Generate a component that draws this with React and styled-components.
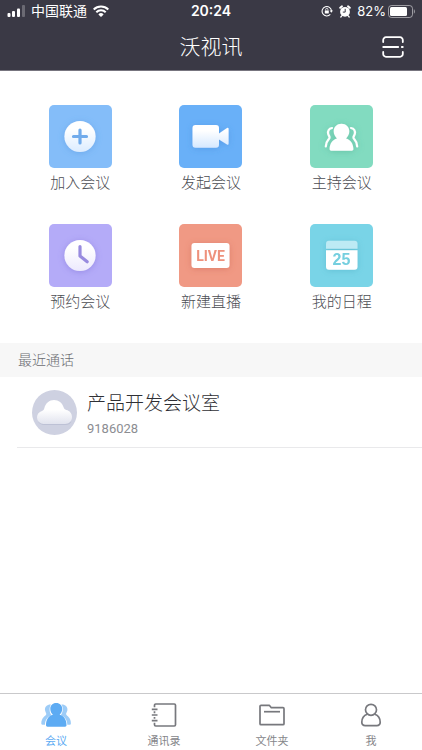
import React from "react";
import styled, { createGlobalStyle, css } from "styled-components";

const GlobalStyle = createGlobalStyle`
  *, *::before, *::after {
    box-sizing: border-box;
  }

  body {
    margin: 0;
    background: #fff;
    font-family: "Liberation Sans", "Noto Sans CJK SC", sans-serif;
    font-weight: 300;
  }

  svg {
    display: block;
    flex-shrink: 0;
  }
`;

const plainButton = css`
  border: 0;
  padding: 0;
  background: none;
  font: inherit;
  color: inherit;
  cursor: pointer;
`;

const Page = styled.div`
  display: flex;
  flex-direction: column;
  min-height: 100vh;
`;

const Header = styled.header`
  background: #3a3945;
  border-bottom: 1px solid #77757f;
  color: #fff;
`;

const StatusBar = styled.div`
  display: grid;
  grid-template-columns: 1fr auto 1fr;
  align-items: center;
  height: 22px;
  padding: 0 7px;
  font-family: Inter, "Noto Sans CJK SC", sans-serif;
  font-size: 14px;
  font-weight: 400;
  line-height: 20px;
`;

const StatusGroup = styled.div`
  display: flex;
  align-items: center;
  justify-content: ${({ $end }) => ($end ? "flex-end" : "flex-start")};
  gap: 6px;
`;

const Time = styled.time`
  font-weight: 600;
`;

const Battery = styled.span`
  display: flex;
  align-items: center;
  gap: 2px;
  font-size: 13px;
`;

const TitleBar = styled.div`
  display: grid;
  grid-template-columns: 1fr auto 1fr;
  align-items: center;
  height: 48px;
  padding: 2px 18px 0;
`;

const Title = styled.h1`
  grid-column: 2;
  margin: 0;
  font-size: 21px;
  font-weight: 300;
  line-height: 30px;
`;

const ScanButton = styled.button`
  ${plainButton}
  justify-self: end;
`;

const Main = styled.main`
  flex: 1;
`;

const ActionGrid = styled.section`
  display: grid;
  grid-template-columns: repeat(3, 1fr);
  row-gap: 29px;
  padding: 34px 15px 29px;
`;

const Action = styled.button`
  ${plainButton}
  display: flex;
  flex-direction: column;
  align-items: center;
  gap: 3px;
  color: #4c4d53;
  font-size: 15px;
  line-height: 24px;
`;

const Tile = styled.span`
  width: 63px;
  height: 63px;
  border-radius: 5px;
  background: ${({ $color }) => $color};
`;

const SectionTitle = styled.h2`
  margin: 0;
  padding: 0 18px;
  background: #f7f7f7;
  color: #6c6d72;
  font-size: 14px;
  font-weight: 300;
  line-height: 34px;
`;

const CallList = styled.ul`
  margin: 0;
  padding: 0 0 0 17px;
  list-style: none;
`;

const CallRow = styled.li`
  display: flex;
  gap: 10px;
  padding: 13px 15px 7px;
  border-bottom: 1px solid #e9e9eb;
`;

const CallName = styled.p`
  margin: 0;
  color: #2f3035;
  font-size: 19px;
  line-height: 28px;
`;

const CallNumber = styled.p`
  margin: 0;
  color: #8c8d92;
  font-family: Roboto, sans-serif;
  font-size: 13px;
  font-weight: 400;
  line-height: 22px;
`;

const TabBar = styled.nav`
  position: sticky;
  bottom: 0;
  display: grid;
  grid-template-columns: 6fr 6fr 6fr 5fr;
  padding: 8px 6px 1px 2px;
  border-top: 1px solid #c9c9cb;
  background: #fff;
`;

const Tab = styled.a`
  display: flex;
  flex-direction: column;
  align-items: center;
  gap: 5px;
  color: ${({ $active }) => ($active ? "#5dabf3" : "#85868a")};
  font-size: 11px;
  font-weight: 400;
  line-height: 16px;
  text-decoration: none;
`;

const SignalIcon = () => (
  <svg width="18" height="12" viewBox="0 0 18 12" fill="#fff">
    <rect x="0.5" y="8" width="3" height="4" rx="1" />
    <rect x="5" y="6" width="3" height="6" rx="1" />
    <rect x="10" y="3.5" width="3" height="8.5" rx="1" />
    <rect x="15" y="0" width="3" height="12" rx="1" opacity="0.25" />
  </svg>
);

const WifiIcon = () => (
  <svg width="16" height="12" viewBox="0 0 16 12" fill="none" stroke="#fff" strokeWidth="2">
    <path d="M0.7 4.5a10.4 10.4 0 0 1 14.6 0" />
    <path d="M3.3 7.3a6.7 6.7 0 0 1 9.4 0" />
    <path d="M8 12 5.4 9.4a3.7 3.7 0 0 1 5.2 0z" fill="#fff" stroke="none" />
  </svg>
);

const LockIcon = () => (
  <svg width="12" height="12" viewBox="0 0 12 12" fill="none" stroke="#fff">
    <path d="M9.3 9.4A4.7 4.7 0 1 1 10.5 6" strokeWidth="1.1" />
    <path d="M8.6 5.4h3.4l-1.7 2.3z" fill="#fff" stroke="none" />
    <rect x="3.8" y="5.4" width="4" height="3" rx="0.4" fill="#fff" stroke="none" />
    <path d="M4.7 5.5V4.4a1.1 1.1 0 0 1 2.2 0v1.1" strokeWidth="0.8" />
  </svg>
);

const AlarmIcon = () => (
  <svg width="12" height="13" viewBox="0 0 12 13">
    <circle cx="6" cy="6.8" r="4.9" fill="#fff" />
    <g stroke="#fff" strokeLinecap="round">
      <path d="M1.2 2.8 3 1.3M10.8 2.8 9 1.3" strokeWidth="1.9" />
      <path d="M2.8 10.8 1.8 12M9.2 10.8l1 1.2" strokeWidth="1.3" />
    </g>
    <path d="M6.2 3.8v3.3H3.8" fill="none" stroke="#3a3945" strokeWidth="1" />
  </svg>
);

const BatteryIcon = () => (
  <svg width="27" height="13" viewBox="0 0 27 13">
    <rect x="0.5" y="0.5" width="24" height="12" rx="3" fill="none" stroke="#fff" strokeOpacity="0.5" />
    <rect x="2" y="2" width="17" height="9" rx="1.5" fill="#fff" />
    <path d="M25.8 4.3c1.5.7 1.5 3.7 0 4.4z" fill="#fff" opacity="0.5" />
  </svg>
);

const ScanIcon = () => (
  <svg width="22" height="22" viewBox="0 0 22 22" fill="none" stroke="#fff" strokeWidth="1.8" strokeLinecap="round">
    <path d="M1.2 6V4A2.8 2.8 0 0 1 4 1.2h14A2.8 2.8 0 0 1 20.8 4v2" />
    <path d="M1.2 16v2A2.8 2.8 0 0 0 4 20.8h14a2.8 2.8 0 0 0 2.8-2.8v-2" />
    <path d="M1.2 11h15M19.8 11h1" />
  </svg>
);

// Shared frame of the home icons: fade from white plus a soft shadow
const TileIcon = ({ id, shade, tint, children }) => (
  <svg width="63" height="63" viewBox="0 0 63 63" aria-hidden="true">
    <defs>
      <linearGradient id={`${id}-fade`} x1="0" y1="0" x2="0" y2="1">
        <stop offset="0.25" stopColor="#fff" />
        <stop offset="1" stopColor={tint} />
      </linearGradient>
      <filter id={`${id}-shadow`} x="-40%" y="-40%" width="180%" height="180%">
        <feDropShadow dx="0" dy="1" stdDeviation="3" floodColor={shade} floodOpacity="0.45" />
      </filter>
    </defs>
    <g fill={`url(#${id}-fade)`} filter={`url(#${id}-shadow)`}>
      {children}
    </g>
  </svg>
);

const JoinIcon = () => (
  <TileIcon id="join" shade="#4f93dd" tint="#dcecff">
    <circle cx="31" cy="31.5" r="15.6" />
    <path d="M31 25v13M24.5 31.5h13" stroke="#70abec" strokeWidth="3.2" strokeLinecap="round" />
  </TileIcon>
);

const CameraIcon = () => (
  <TileIcon id="camera" shade="#3f86d8" tint="#d5e8ff">
    <path d="M16.5 20H37a3 3 0 0 1 3 3v5.6l8-5.6q1.6-.8 1.6 1v14.6q0 1.8-1.6 1L40 34.5v5.2a3 3 0 0 1-3 3H16.5a3 3 0 0 1-3-3V23a3 3 0 0 1 3-3z" />
  </TileIcon>
);

const HostIcon = () => (
  <TileIcon id="host" shade="#45a889" tint="#fff">
    <g fill="none" stroke="#fff" strokeWidth="2.2" strokeLinecap="round">
      <path d="M22 23c-3 .4-4.6 3-3.8 6 .3 1.5 1.8 2.5 1.3 4-.6 1.7-3.7 2.5-3.7 8.5" />
      <path d="M41 23c3 .4 4.6 3 3.8 6-.3 1.5-1.8 2.5-1.3 4 .6 1.7 3.7 2.5 3.7 8.5" />
    </g>
    <path d="M31.5 18.7c4.6 0 7.8 3.2 7.8 7.5 0 3.2-1.5 5.4-3.3 7.2 4.6 1.3 7.4 5.3 7.4 10.6 0 1.2-.6 1.7-1.6 1.7H21.2c-1 0-1.6-.5-1.6-1.7 0-5.3 2.8-9.3 7.4-10.6-1.8-1.8-3.3-4-3.3-7.2 0-4.3 3.2-7.5 7.8-7.5z" />
  </TileIcon>
);

const ClockIcon = () => (
  <TileIcon id="clock" shade="#7466cf" tint="#ece9fd">
    <circle cx="31" cy="31.5" r="15.6" />
    <path d="M31 22.5V32l7.2 5.8" fill="none" stroke="#988bdf" strokeWidth="3.2" strokeLinecap="round" strokeLinejoin="round" />
  </TileIcon>
);

const LiveIcon = () => (
  <TileIcon id="live" shade="#c75e48" tint="#fff">
    <rect x="12.5" y="19" width="38" height="25" rx="3" />
    <text x="31.5" y="36.5" textAnchor="middle" fill="#ee917b" fontFamily="Roboto, sans-serif" fontSize="14" fontWeight="700">
      LIVE
    </text>
  </TileIcon>
);

const CalendarIcon = () => (
  <TileIcon id="calendar" shade="#49a9bf" tint="#fff">
    <path d="M19 16.7h25.5a3 3 0 0 1 3 3v5H16v-5a3 3 0 0 1 3-3z" fill="#bdeaf4" />
    <path d="M16 26.3h31.5v16.4a3 3 0 0 1-3 3H19a3 3 0 0 1-3-3z" />
    <text x="31.5" y="41" textAnchor="middle" fill="#74cfdf" fontFamily="Liberation Sans, sans-serif" fontSize="16" fontWeight="700">
      25
    </text>
  </TileIcon>
);

const CloudAvatar = () => (
  <svg width="45" height="45" viewBox="0 0 45 45" aria-hidden="true">
    <defs>
      <linearGradient id="cloud-fade" x1="0" y1="0" x2="0" y2="1">
        <stop offset="0.4" stopColor="#fff" />
        <stop offset="1" stopColor="#e1e3ee" />
      </linearGradient>
    </defs>
    <circle cx="22.5" cy="22.5" r="22.5" fill="#ced1e1" />
    <path d="M12 35a7 7 0 0 1-6-3.5h33.5A7 7 0 0 1 33 35z" fill="#bdc1d5" />
    <path d="M11.500 34A6.500 6.500 0 0 1 5 27.500c0-3.300 2.100-5.600 5-6.500 1.300-.5 1.900-1.400 2.300-2.800C13.700 13 17.300 10 22 10s8.300 3 9.600 7.300c.5 1.500 1.200 2.200 2.700 2.600 3.400.7 5.700 3.400 5.700 7.100 0 4.200-3 7-6.800 7z" fill="url(#cloud-fade)" />
  </svg>
);

const MeetingTabIcon = () => (
  <svg width="30" height="26" viewBox="0 0 30 26" fill="#5dabf3">
    <g opacity="0.6">
      <path d="M10 2.5C6 2.3 3.5 5 4 8.300c.3 2 1.700 3 1.200 4.300C4.700 14 .4 15.500.3 21.500c0 .8.300 1.200 1 1.200H4c.2-4.500 2-8 6.600-9.500C8.500 11 7.700 5.500 10 2.500z" />
      <path d="M20.400 2.500c4-.2 6.500 2.500 6 5.800-.3 2-1.700 3-1.200 4.300.5 1.400 4.800 2.900 4.700 8.900 0 .8-.3 1.200-1 1.200h-2.600c-.2-4.500-2-8-6.600-9.500 2.200-2.200 3-7.700.7-10.700z" />
    </g>
    <path d="M15.200 1c3.700 0 6 2.500 6 5.700 0 2.600-1 4.600-2.600 6 4.300 1.200 6.900 4.900 6.900 10.300 0 1.200-.5 1.700-1.500 1.700H6.500c-1 0-1.500-.5-1.500-1.700 0-5.400 2.500-9.100 6.900-10.300-1.600-1.400-2.600-3.400-2.600-6C9.300 3.500 11.500 1 15.200 1z" />
  </svg>
);

const ContactsTabIcon = () => (
  <svg width="26" height="26" viewBox="0 0 26 26" fill="none" stroke="#77787d" strokeWidth="1.7">
    <path d="M3.500 5.300V3.200c0-.8.500-1.200 1.200-1.200h18.600c.7 0 1.200.4 1.200 1.200v19.600c0 .8-.5 1.200-1.200 1.200H4.700c-.7 0-1.200-.4-1.200-1.200v-2.100M3.500 9.300v1.900M3.500 14.900v1.900" />
    <path d="M.8 7.300h5.700M.8 13h5.700M.8 18.700h5.700" />
  </svg>
);

const FilesTabIcon = () => (
  <svg width="26" height="26" viewBox="0 0 26 26" fill="none" stroke="#77787d" strokeWidth="1.7" strokeLinejoin="round">
    <path d="M1 21.700V4.300C1 3.700 1.400 3.300 2 3.300h8.300l2 2.400H24c.6 0 1 .4 1 1v15c0 .6-.4 1-1 1H2c-.6 0-1-.4-1-1z" />
    <path d="M5 9.700h16" />
  </svg>
);

const MeTabIcon = () => (
  <svg width="26" height="26" viewBox="0 0 26 26" fill="none" stroke="#77787d" strokeWidth="1.7">
    <circle cx="13" cy="7.8" r="5.5" />
    <path d="M9.200 12.200C6 13.300 3.800 16.500 3.800 20.300c0 2.500 1.300 3.300 3.400 3.300h11.600c2.100 0 3.400-.8 3.400-3.300 0-3.800-2.200-7-5.400-8.100" />
  </svg>
);

const actions = [
  { label: "加入会议", color: "#84bdf9", icon: <JoinIcon /> },
  { label: "发起会议", color: "#69b0f8", icon: <CameraIcon /> },
  { label: "主持会议", color: "#82dbc0", icon: <HostIcon /> },
  { label: "预约会议", color: "#b4abf8", icon: <ClockIcon /> },
  { label: "新建直播", color: "#f09984", icon: <LiveIcon /> },
  { label: "我的日程", color: "#79d4e7", icon: <CalendarIcon /> },
];

const calls = [{ name: "产品开发会议室", number: "9186028" }];

const tabs = [
  { label: "会议", icon: <MeetingTabIcon />, active: true },
  { label: "通讯录", icon: <ContactsTabIcon /> },
  { label: "文件夹", icon: <FilesTabIcon /> },
  { label: "我", icon: <MeTabIcon /> },
];

export default function App() {
  return (
    <Page>
      <GlobalStyle />
      <Header>
        <StatusBar>
          <StatusGroup>
            <SignalIcon />
            <span>中国联通</span>
            <WifiIcon />
          </StatusGroup>
          <Time>20:24</Time>
          <StatusGroup $end>
            <LockIcon />
            <AlarmIcon />
            <Battery>
              82%
              <BatteryIcon />
            </Battery>
          </StatusGroup>
        </StatusBar>
        <TitleBar>
          <Title>沃视讯</Title>
          <ScanButton type="button">
            <ScanIcon />
          </ScanButton>
        </TitleBar>
      </Header>

      <Main>
        <ActionGrid>
          {actions.map(({ label, color, icon }) => (
            <Action type="button" key={label}>
              <Tile $color={color}>{icon}</Tile>
              {label}
            </Action>
          ))}
        </ActionGrid>

        <SectionTitle>最近通话</SectionTitle>
        <CallList>
          {calls.map(({ name, number }) => (
            <CallRow key={number}>
              <CloudAvatar />
              <div>
                <CallName>{name}</CallName>
                <CallNumber>{number}</CallNumber>
              </div>
            </CallRow>
          ))}
        </CallList>
      </Main>

      <TabBar>
        {tabs.map(({ label, icon, active }) => (
          <Tab href="#" key={label} $active={active}>
            {icon}
            {label}
          </Tab>
        ))}
      </TabBar>
    </Page>
  );
}
